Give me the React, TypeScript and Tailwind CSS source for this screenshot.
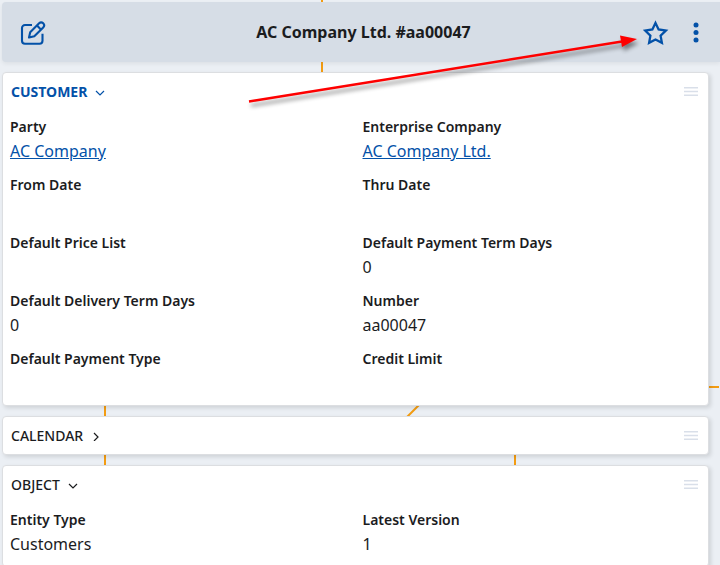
import type { ReactNode } from "react";

type Field = { label: string; value?: string; link?: boolean };

const customerFields: Field[] = [
  { label: "Party", value: "AC Company", link: true },
  { label: "Enterprise Company", value: "AC Company Ltd.", link: true },
  { label: "From Date" },
  { label: "Thru Date" },
  { label: "Default Price List" },
  { label: "Default Payment Term Days", value: "0" },
  { label: "Default Delivery Term Days", value: "0" },
  { label: "Number", value: "aa00047" },
  { label: "Default Payment Type" },
  { label: "Credit Limit" },
];

const objectFields: Field[] = [
  { label: "Entity Type", value: "Customers" },
  { label: "Latest Version", value: "1" },
];

function EditIcon() {
  return (
    <svg width="26" height="26" viewBox="0 0 26 26" fill="none" stroke="currentColor" strokeWidth="2.1" strokeLinejoin="round">
      <path d="M12 6H5a3 3 0 0 0-3 3V21.700a3 3 0 0 0 3 3h14.500a3 3 0 0 0 3-3v-7" />
      <path d="M9 18.500l1.200-5.300 8.900-8.900a2.700 2.700 0 0 1 4.100 4.100l-8.900 8.900z" />
      <path d="M17 6.600l3.900 3.900" />
    </svg>
  );
}

function StarIcon() {
  return (
    <svg width="26" height="26" viewBox="0 0 26 26" fill="none" stroke="currentColor" strokeWidth="2.3" strokeLinejoin="miter">
      <path d="M12.500 4l3.100 6.400 7.300 1.100-5.300 5.100 1.300 7.200-6.400-3.300-6.400 3.300 1.300-7.200-5.300-5.100 7.300-1.100z" />
    </svg>
  );
}

function DotsIcon() {
  return (
    <svg width="6" height="22" viewBox="0 0 6 22" fill="currentColor">
      <circle cx="3" cy="4" r="2.500" />
      <circle cx="3" cy="11.500" r="2.500" />
      <circle cx="3" cy="19" r="2.500" />
    </svg>
  );
}

function Chevron({ open }: { open: boolean }) {
  return (
    <svg width="10" height="10" viewBox="0 0 10 10" fill="none" stroke="currentColor" strokeWidth="1.200">
      <path d={open ? "M1 4l4 4 4-4" : "M3 2l4 4-4 4"} />
    </svg>
  );
}

function GripIcon() {
  return (
    <svg width="14" height="10" viewBox="0 0 14 10" stroke="#d9dfe9" strokeWidth="1.500">
      <path d="M0 0.800h14M0 4.500h14M0 8.200h14" />
    </svg>
  );
}

function Section({ title, open = false, active = false, children }: { title: string; open?: boolean; active?: boolean; children?: ReactNode }) {
  return (
    <section className="shrink-0 rounded border border-[#dcdee1] bg-white shadow-[2px_2px_4px_rgba(0,0,0,0.12)]">
      <header className="flex h-[37px] items-center justify-between pr-[10px] pl-2">
        <h2 className={active ? "text-sm font-bold text-[#0351a8]" : "text-sm font-medium"}>
          <button type="button" aria-expanded={open} className="flex items-center gap-2">
            {title}
            <Chevron open={open} />
          </button>
        </h2>
        <button type="button" aria-label={`Move ${title}`}>
          <GripIcon />
        </button>
      </header>
      {children}
    </section>
  );
}

function Fields({ items }: { items: Field[] }) {
  return (
    <dl className="grid grid-cols-2 gap-y-[10px] pt-[5px] pb-[10px]">
      {items.map((f) => (
        <div key={f.label} className="px-[7px]">
          <dt className="text-sm leading-6 font-semibold">{f.label}</dt>
          <dd className="h-6 text-base leading-6">
            {f.link ? (
              <a href="#" className="text-[#0351a8] underline">
                {f.value}
              </a>
            ) : (
              f.value
            )}
          </dd>
        </div>
      ))}
    </dl>
  );
}

export default function App() {
  return (
    <div className="relative isolate h-screen overflow-hidden bg-[#ebeff4] font-['Noto_Sans',sans-serif] text-[#1b1c1e]">
      <svg className="absolute top-0 left-0 -z-10" width="720" height="565" fill="none" stroke="#f39c12" strokeWidth="2" aria-hidden="true">
        <path d="M322 0v76M105 400v70M515 450v20M422 402l-20 20M700 387h19" />
      </svg>

      <main className="flex flex-col gap-[10px] pt-[2px] pl-[2px]">
        <header className="flex h-[60px] shrink-0 items-center rounded-l bg-[#d6dde6] pr-[21px] pl-[18px] text-[#0351a8] shadow-[0_2px_4px_rgba(0,0,0,0.06)]">
          <div className="flex flex-1">
            <button type="button" aria-label="Edit">
              <EditIcon />
            </button>
          </div>
          <h1 className="pl-2 text-base font-bold text-[#1b1c1e]">AC Company Ltd. #aa00047</h1>
          <div className="flex flex-1 items-center justify-end gap-6">
            <button type="button" aria-label="Add to favourites">
              <StarIcon />
            </button>
            <button type="button" aria-label="More actions">
              <DotsIcon />
            </button>
          </div>
        </header>

        <div className="flex flex-col gap-[10px] pr-[11px]">
          <Section title="CUSTOMER" open active>
            <Fields items={customerFields} />
          </Section>
          <Section title="CALENDAR" />
          <Section title="OBJECT" open>
            <Fields items={objectFields} />
          </Section>
        </div>
      </main>

      <svg className="pointer-events-none absolute top-0 left-0" width="720" height="120" aria-hidden="true">
        <g className="drop-shadow-[2px_4px_2px_rgba(0,0,0,0.45)]">
          <path d="M249 101.500L622 41.500" stroke="#fe0000" strokeWidth="2.400" />
          <path d="M637 39l-17-3.500 2 11.500z" fill="#fe0000" />
        </g>
      </svg>
    </div>
  );
}
